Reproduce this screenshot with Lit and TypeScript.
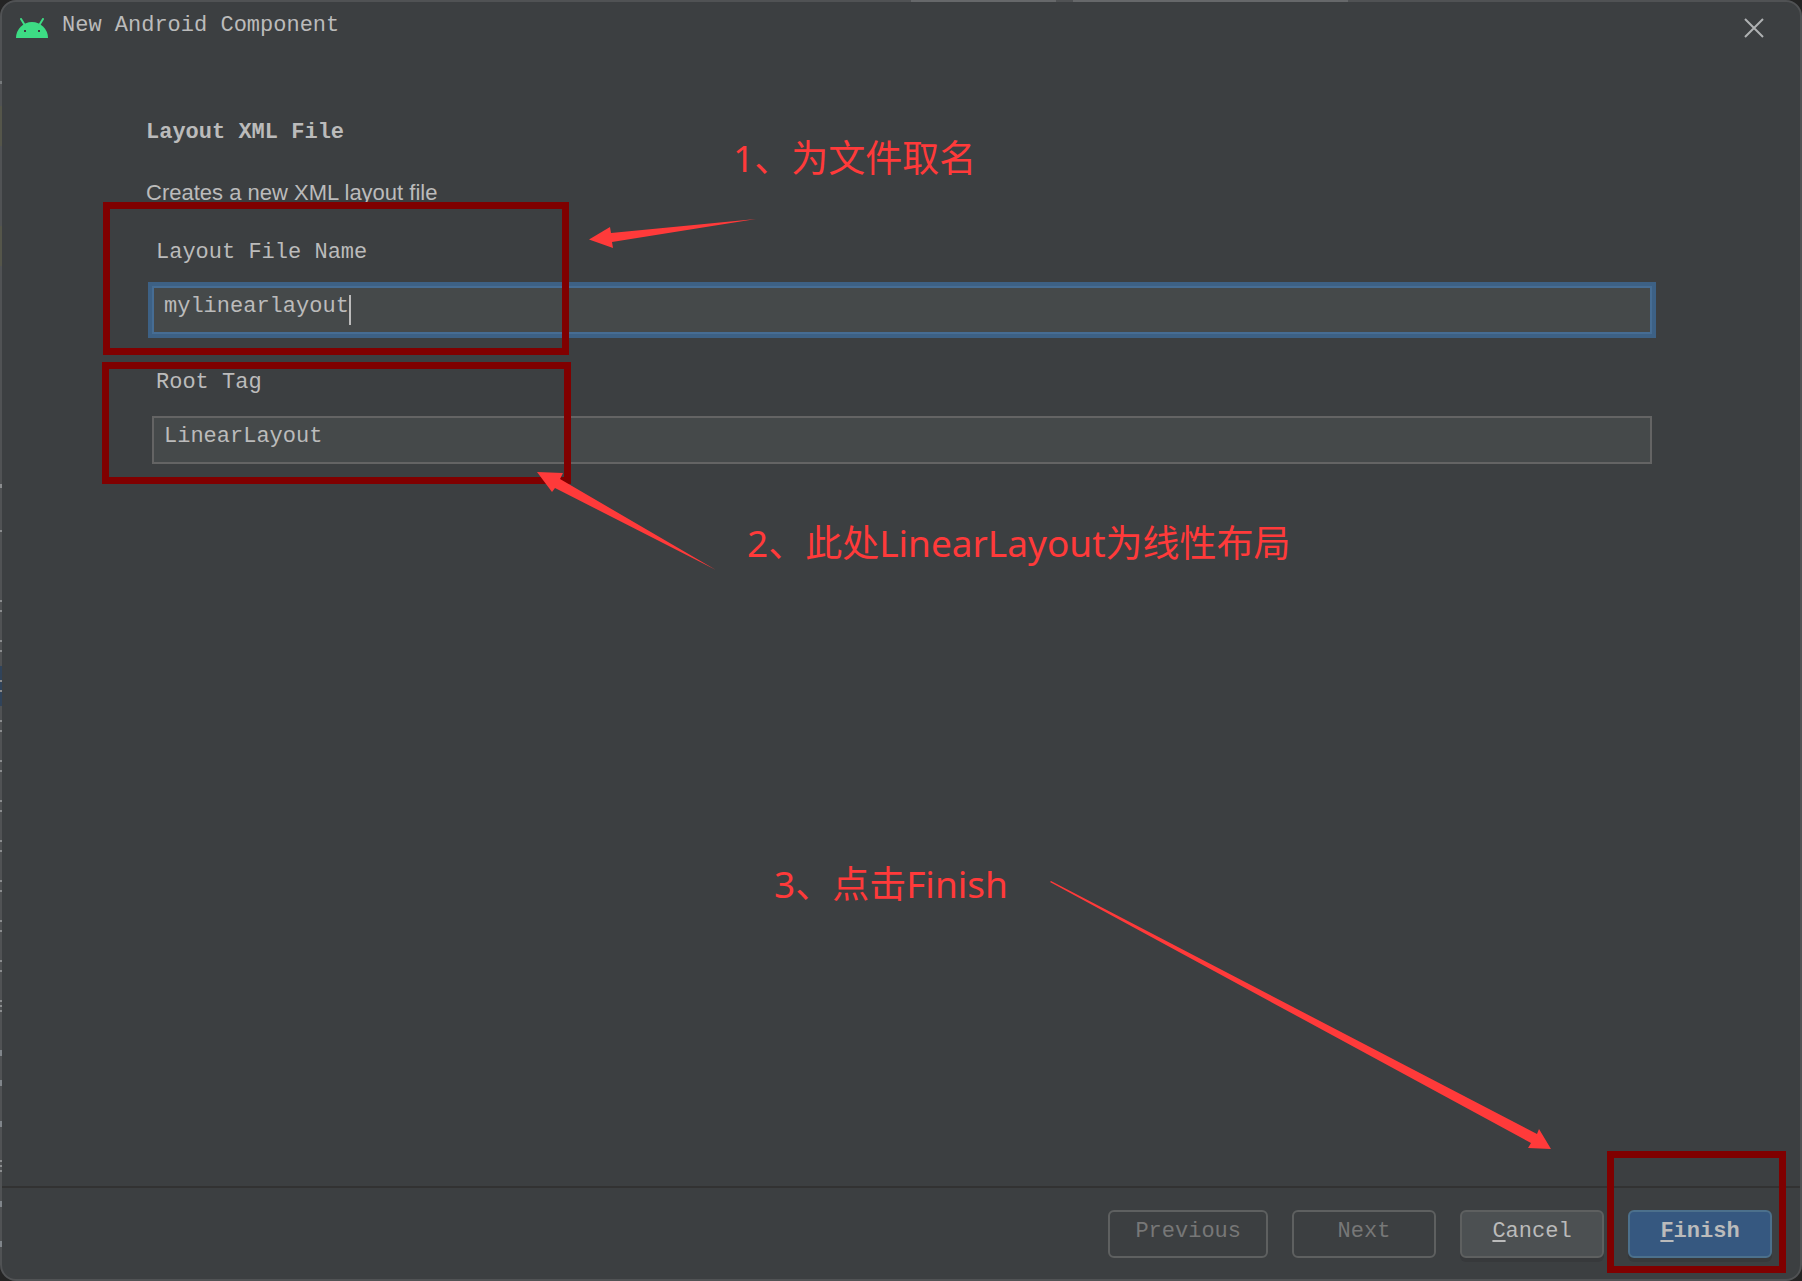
import { LitElement, html, css, svg } from "lit";
import { customElement, state } from "lit/decorators.js";

interface EdgeMark {
  y: number;
  h: number;
  color: string;
}

// Slivers of the editor behind the dialog that show through its left border.
const EDGE_MARKS: EdgeMark[] = [
  { y: 81, h: 3, color: "#76797b" },
  { y: 106, h: 40, color: "#55564a" },
  { y: 226, h: 40, color: "#55564a" },
  { y: 484, h: 4, color: "#8a8c8e" },
  { y: 530, h: 2, color: "#8a8c8e" },
  { y: 666, h: 40, color: "#30435a" },
  ...Array.from({ length: 10 }, (_, i) => 600 + i * 40).flatMap((y) => [
    { y, h: 2, color: "#8a8c8e" },
    { y: y + 10, h: 2, color: "#8a8c8e" },
  ]),
  ...[1000, 1160].flatMap((y) => [
    { y, h: 2, color: "#8a8c8e" },
    { y: y + 5, h: 2, color: "#8a8c8e" },
    { y: y + 10, h: 2, color: "#8a8c8e" },
  ]),
  ...[1050, 1080, 1121, 1201, 1241].map((y) => ({ y, h: 6, color: "#80858a" })),
];

@customElement("app-root")
export class AppRoot extends LitElement {
  @state() private fileName = "mylinearlayout";
  @state() private rootTag = "LinearLayout";

  static styles = css`
    :host {
      display: block;
      position: relative;
      background: #242424;
      --mono: "Liberation Mono", monospace;
      --ink: #bbbbbb;
    }
    * {
      box-sizing: border-box;
    }
    .dialog {
      position: relative;
      display: flex;
      flex-direction: column;
      min-height: 100vh;
      border: 2px solid #505254;
      border-radius: 16px;
      background: #3c3f41;
      color: var(--ink);
      font: 22px/28px var(--mono);
      overflow: hidden;
    }
    .edge {
      position: absolute;
      left: 0;
      top: 0;
      pointer-events: none;
    }
    .titlebar {
      display: flex;
      align-items: flex-start;
      gap: 14px;
      padding: 10px 36px 0 14px;
    }
    .robot {
      display: block;
      width: 32px;
      height: 20px;
      margin-top: 6px;
    }
    .title {
      flex: 1;
      margin: 0;
      font: inherit;
    }
    .close {
      display: block;
      padding: 0;
      margin-top: 6px;
      border: 0;
      background: none;
      color: #afb1b3;
    }
    .close svg {
      display: block;
    }
    .body {
      flex: 1;
      padding: 79px 144px 0;
    }
    .heading {
      margin: 0;
      font: bold 22px/28px var(--mono);
    }
    .summary {
      margin: 34px 0 0;
      font: 22px/24px "Liberation Sans", Arial, sans-serif;
    }
    .fields {
      display: flex;
      flex-direction: column;
      gap: 35px;
      padding: 34px 4px 0 6px;
    }
    .field {
      display: flex;
      flex-direction: column;
      gap: 19px;
    }
    .field label {
      padding-left: 4px;
    }
    .input {
      width: 100%;
      height: 48px;
      padding: 0 10px 8px;
      border: 2px solid #646464;
      border-radius: 0;
      outline: none;
      background: #45494a;
      color: var(--ink);
      font: inherit;
    }
    .input.active {
      border-color: #466d94;
      box-shadow: 0 0 0 4px #3d6185;
    }
    .entry {
      display: grid;
    }
    .entry > * {
      grid-area: 1 / 1;
    }
    .caret {
      display: flex;
      align-items: center;
      padding-left: 12px;
      pointer-events: none;
    }
    .caret::after {
      content: "";
      width: 2px;
      height: 30px;
      background: var(--ink);
    }
    .ghost {
      visibility: hidden;
    }
    .footer {
      display: flex;
      justify-content: flex-end;
      gap: 24px;
      padding: 22px 28px 21px;
      border-top: 2px solid #323232;
    }
    .button {
      display: block;
      min-width: 144px;
      height: 48px;
      padding: 0 25px 5px;
      border: 2px solid #5e6060;
      border-radius: 6px;
      background: #4c5052;
      box-shadow: 0 4px 0 #37393b;
      color: var(--ink);
      font: inherit;
    }
    .button:disabled {
      background: transparent;
      box-shadow: none;
      color: #777777;
    }
    .button.primary {
      border-color: #4c708c;
      background: #365880;
      font-weight: bold;
    }
    .mnemonic {
      text-decoration: underline;
      text-decoration-thickness: 2px;
      text-underline-offset: 3px;
    }
    .primary-slot {
      position: relative;
    }
    .frame {
      position: absolute;
      border: 7px solid #800000;
      pointer-events: none;
    }
    .frame-name {
      left: 101px;
      top: 200px;
      width: 466px;
      height: 153px;
    }
    .frame-root {
      left: 100px;
      top: 360px;
      width: 469px;
      height: 122px;
    }
    .frame-finish {
      left: -21px;
      right: -14px;
      top: -59px;
      height: 122px;
    }
    .note {
      position: absolute;
      margin: 0;
      color: #ff3a3a;
      font: 37px/48px "Noto Sans", "Noto Sans CJK SC", sans-serif;
      white-space: nowrap;
    }
    .note-name {
      left: 731px;
      top: 132px;
    }
    .note-root {
      left: 745px;
      top: 517px;
    }
    .note-finish {
      left: 772px;
      top: 858px;
    }
    .arrow {
      position: absolute;
      fill: #ff3a3a;
      pointer-events: none;
    }
    .arrow-name {
      left: 586px;
      top: 216px;
    }
    .arrow-root {
      left: 534px;
      top: 468px;
    }
    .arrow-finish {
      right: 248px;
      bottom: 128px;
    }
  `;

  private arrow(name: string, width: number, height: number, points: string) {
    return html`<svg
      class="arrow arrow-${name}"
      width=${width}
      height=${height}
      viewBox="0 0 ${width} ${height}"
      aria-hidden="true"
    >
      ${svg`<polygon points=${points} />`}
    </svg>`;
  }

  render() {
    return html`
      <main class="dialog">
        <header class="titlebar">
          <svg class="robot" viewBox="0 0 32 20" aria-hidden="true">
            <path d="M0 20a16 16 0 0 1 32 0z" fill="#3ddc84" />
            <path d="M5 1l4 6.500M27 1l-4 6.500" stroke="#3ddc84" stroke-width="2" stroke-linecap="round" />
            <path d="M8 12h2v2h-2zM22 12h2v2h-2z" fill="#3c3f41" />
          </svg>
          <h1 class="title">New Android Component</h1>
          <button class="close" type="button" aria-label="Close">
            <svg width="20" height="20" viewBox="0 0 20 20">
              <path d="M1 1l18 18M19 1L1 19" stroke="currentColor" stroke-width="2" />
            </svg>
          </button>
        </header>

        <section class="body">
          <h2 class="heading">Layout XML File</h2>
          <p class="summary">Creates a new XML layout file</p>
          <div class="fields">
            <div class="field">
              <label for="file-name">Layout File Name</label>
              <div class="entry">
                <input
                  id="file-name"
                  class="input active"
                  type="text"
                  spellcheck="false"
                  .value=${this.fileName}
                  @input=${(e: Event) => (this.fileName = (e.target as HTMLInputElement).value)}
                />
                <div class="caret" aria-hidden="true"><span class="ghost">${this.fileName}</span></div>
              </div>
            </div>
            <div class="field">
              <label for="root-tag">Root Tag</label>
              <input
                id="root-tag"
                class="input"
                type="text"
                spellcheck="false"
                .value=${this.rootTag}
                @input=${(e: Event) => (this.rootTag = (e.target as HTMLInputElement).value)}
              />
            </div>
          </div>
        </section>

        <footer class="footer">
          <button class="button" type="button" disabled>Previous</button>
          <button class="button" type="button" disabled>Next</button>
          <button class="button" type="button"><span class="mnemonic">C</span>ancel</button>
          <div class="primary-slot">
            <button class="button primary" type="button"><span class="mnemonic">F</span>inish</button>
            <div class="frame frame-finish"></div>
          </div>
        </footer>

        <div class="frame frame-name"></div>
        <div class="frame frame-root"></div>
        <p class="note note-name">1、为文件取名</p>
        <p class="note note-root">2、此处LinearLayout为线性布局</p>
        <p class="note note-finish">3、点击Finish</p>
        ${this.arrow("name", 170, 34, "1,21.500 22,9 23,15 168,1 24,24 25,30")}
        ${this.arrow("root", 182, 102, "1,2 27,3 24,9 180,100 19,18 16,22")}
        ${this.arrow("finish", 504, 270, "3,0 489,253 491,248 503,268 480,267 483,262 2,1")}
      </main>
      <svg class="edge" width="1360" height="1260" viewBox="0 0 1360 1260" aria-hidden="true">
        ${EDGE_MARKS.map((m) => svg`<rect x="0" y=${m.y} width="2" height=${m.h} fill=${m.color} />`)}
        <path d="M911 0h145v2h-145zM1073 0h275v2h-275z" fill="#66686a" />
      </svg>
    `;
  }
}
